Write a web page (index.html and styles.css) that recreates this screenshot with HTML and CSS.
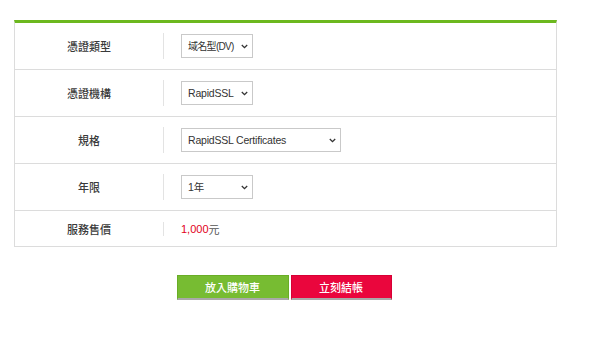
FILE: index.html
```html
<!DOCTYPE html>
<html lang="zh-Hant">
<head>
    <meta charset="UTF-8">
    <meta name="viewport" content="width=device-width, initial-scale=1.0">
    <title>SSL 憑證</title>
    <link rel="stylesheet" href="styles.css">
</head>
<body>
    <div class="page">
        <div class="spec-table">
            <div class="spec-row">
                <div class="spec-label">憑證類型</div>
                <div class="spec-value">
                    <div class="select-wrap">
                        <select class="spec-select tight">
                            <option>域名型(DV)</option>
                        </select>
                        <svg class="chevron" width="7" height="5" viewBox="0 0 7 5"><path d="M0.8 1 L3.5 3.7 L6.2 1" fill="none" stroke="#333" stroke-width="1.3"/></svg>
                    </div>
                </div>
            </div>
            <div class="spec-row">
                <div class="spec-label">憑證機構</div>
                <div class="spec-value">
                    <div class="select-wrap">
                        <select class="spec-select">
                            <option>RapidSSL</option>
                        </select>
                        <svg class="chevron" width="7" height="5" viewBox="0 0 7 5"><path d="M0.8 1 L3.5 3.7 L6.2 1" fill="none" stroke="#333" stroke-width="1.3"/></svg>
                    </div>
                </div>
            </div>
            <div class="spec-row">
                <div class="spec-label">規格</div>
                <div class="spec-value">
                    <div class="select-wrap">
                        <select class="spec-select wide">
                            <option>RapidSSL Certificates</option>
                        </select>
                        <svg class="chevron" width="7" height="5" viewBox="0 0 7 5"><path d="M0.8 1 L3.5 3.7 L6.2 1" fill="none" stroke="#333" stroke-width="1.3"/></svg>
                    </div>
                </div>
            </div>
            <div class="spec-row">
                <div class="spec-label">年限</div>
                <div class="spec-value">
                    <div class="select-wrap">
                        <select class="spec-select">
                            <option>1年</option>
                        </select>
                        <svg class="chevron" width="7" height="5" viewBox="0 0 7 5"><path d="M0.8 1 L3.5 3.7 L6.2 1" fill="none" stroke="#333" stroke-width="1.3"/></svg>
                    </div>
                </div>
            </div>
            <div class="spec-row short">
                <div class="spec-label">服務售價</div>
                <div class="spec-value">
                    <span class="price">1,000</span>元
                </div>
            </div>
        </div>

        <div class="actions">
            <button class="btn btn-cart">放入購物車</button>
            <button class="btn btn-buy">立刻結帳</button>
        </div>
    </div>
</body>
</html>
```

FILE: styles.css
```css
body {
    margin: 0;
    background: #fff;
    font-family: "Liberation Sans", "Noto Sans CJK TC", sans-serif;
    font-size: 11px;
    color: #333;
}
.page {
    width: 543px;
    padding: 20px 0 0 14px;
}
.spec-table {
    border: 1px solid #dcdcdc;
    border-top: 3px solid #6cb81e;
}
.spec-row {
    display: flex;
    align-items: center;
    height: 46px;
    border-bottom: 1px solid #dcdcdc;
}
.spec-row.short {
    height: 35px;
    border-bottom: none;
}
.spec-label {
    width: 148px;
    text-align: center;
    color: #3a3a3a;
    font-weight: 500;
}
.spec-value {
    flex: 1;
    display: flex;
    align-items: center;
    height: 26px;
    padding-left: 17px;
    border-left: 1px solid #e3e3e3;
    color: #555;
}
.short .spec-value {
    height: 14px;
}
.select-wrap {
    position: relative;
    display: flex;
}
.spec-select {
    width: 72px;
    height: 24px;
    padding: 0 0 0 6px;
    border: 1px solid #c9c9c9;
    border-radius: 0;
    background: #fff;
    color: #333;
    font-family: "Liberation Sans", "Noto Sans CJK TC", sans-serif;
    font-size: 10.5px;
    letter-spacing: -0.2px;
    appearance: none;
    -webkit-appearance: none;
}
.spec-select.tight {
    font-size: 10px;
    letter-spacing: -0.7px;
}
.spec-select.wide {
    width: 160px;
}
.chevron {
    position: absolute;
    right: 5px;
    top: 10px;
    pointer-events: none;
}
.price {
    color: #e2001a;
}
.actions {
    display: flex;
    justify-content: center;
    gap: 2px;
    margin-top: 28px;
    padding-right: 3px;
}
.btn {
    height: 25px;
    padding: 0;
    border: 1px solid;
    border-bottom: 2px solid #a9a9a9;
    border-radius: 0;
    color: #fff;
    font-family: "Noto Sans CJK TC", sans-serif;
    font-size: 11px;
    font-weight: 500;
    cursor: pointer;
}
.btn-cart {
    width: 112px;
    background: #77bc32;
    border-color: #69ad26 #69ad26 #a9a9a9;
}
.btn-buy {
    width: 101px;
    background: #ea063d;
    border-color: #d70035 #d70035 #a9a9a9;
}
```
